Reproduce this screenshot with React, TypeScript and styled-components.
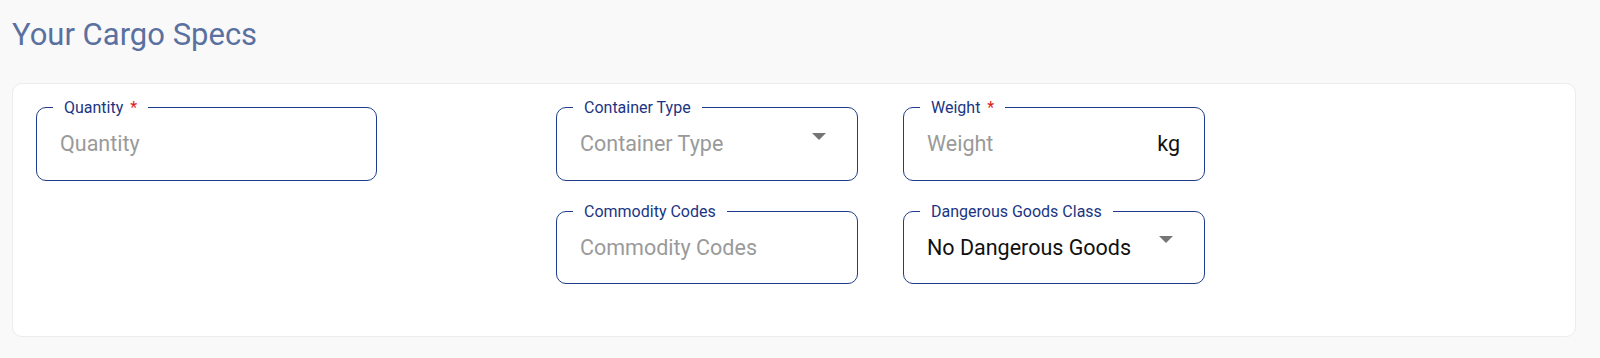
import styled, { createGlobalStyle } from "styled-components";

const GlobalStyle = createGlobalStyle`
  body {
    margin: 0;
    background: #f9f9fa;
    font-family: Roboto, "Liberation Sans", sans-serif;
  }
`;

const Page = styled.div`
  padding: 17px 24px 0 12px;
`;
const Title = styled.h2`
  margin: 0 0 30px;
  color: #5a71a0;
  font-size: 31px;
  font-weight: 400;
  line-height: 36px;
`;
const Card = styled.div`
  background: #fff;
  border: 1px solid #ebebf0;
  border-radius: 10px;
  padding: 14px 24px 52px 23px;
`;
const Grid = styled.div`
  display: grid;
  grid-template-columns: 341px 89px 302px 302px;
  column-gap: 45px;
  row-gap: 21px;
`;
const Box = styled.fieldset<{ $col: number }>`
  grid-column: ${(p) => p.$col};
  box-sizing: border-box;
  height: 82.5px;
  margin: 0;
  padding: 0 24px 0 23px;
  border: 1.5px solid #1f3c8c;
  border-radius: 10px;
  display: flex;
  align-items: center;
  min-width: 0;
`;
const Legend = styled.legend`
  margin-left: -7px;
  padding: 0 11px 0 11px;
  font-size: 16px;
  line-height: 19px;
  color: #1b3583;
`;
const Star = styled.span`
  color: #e01b1b;
  margin-left: 7px;
`;
const Value = styled.span<{ $placeholder?: boolean }>`
  flex: 1;
  font-size: 21.5px;
  margin-top: -9px;
  color: ${(p) => (p.$placeholder ? "#9a9a9a" : "#111")};
`;
const Unit = styled.span`
  font-size: 21.5px;
  margin-top: -9px;
  color: #111;
`;
const Arrow = styled.svg`
  width: 14px;
  height: 7px;
  margin-top: -24px;
  margin-right: 7px;
  fill: #757575;
`;

const Caret = () => (
  <Arrow viewBox="0 0 14 7">
    <path d="M0 0h14L7 7z" />
  </Arrow>
);

type FieldProps = {
  col: number;
  label: string;
  required?: boolean;
  value: string;
  placeholder?: boolean;
  unit?: string;
  select?: boolean;
};

const Field = ({ col, label, required, value, placeholder, unit, select }: FieldProps) => (
  <Box $col={col}>
    <Legend>
      {label}
      {required && <Star>*</Star>}
    </Legend>
    <Value $placeholder={placeholder}>{value}</Value>
    {unit && <Unit>{unit}</Unit>}
    {select && <Caret />}
  </Box>
);

const App = () => {
  return (
    <Page>
      <GlobalStyle />
      <Title>Your Cargo Specs</Title>
      <Card>
        <Grid>
          <Field col={1} label="Quantity" required value="Quantity" placeholder />
          <Field col={3} label="Container Type" value="Container Type" placeholder select />
          <Field col={4} label="Weight" required value="Weight" placeholder unit="kg" />
          <Field col={3} label="Commodity Codes" value="Commodity Codes" placeholder />
          <Field col={4} label="Dangerous Goods Class" value="No Dangerous Goods" select />
        </Grid>
      </Card>
    </Page>
  );
};

export default App;
